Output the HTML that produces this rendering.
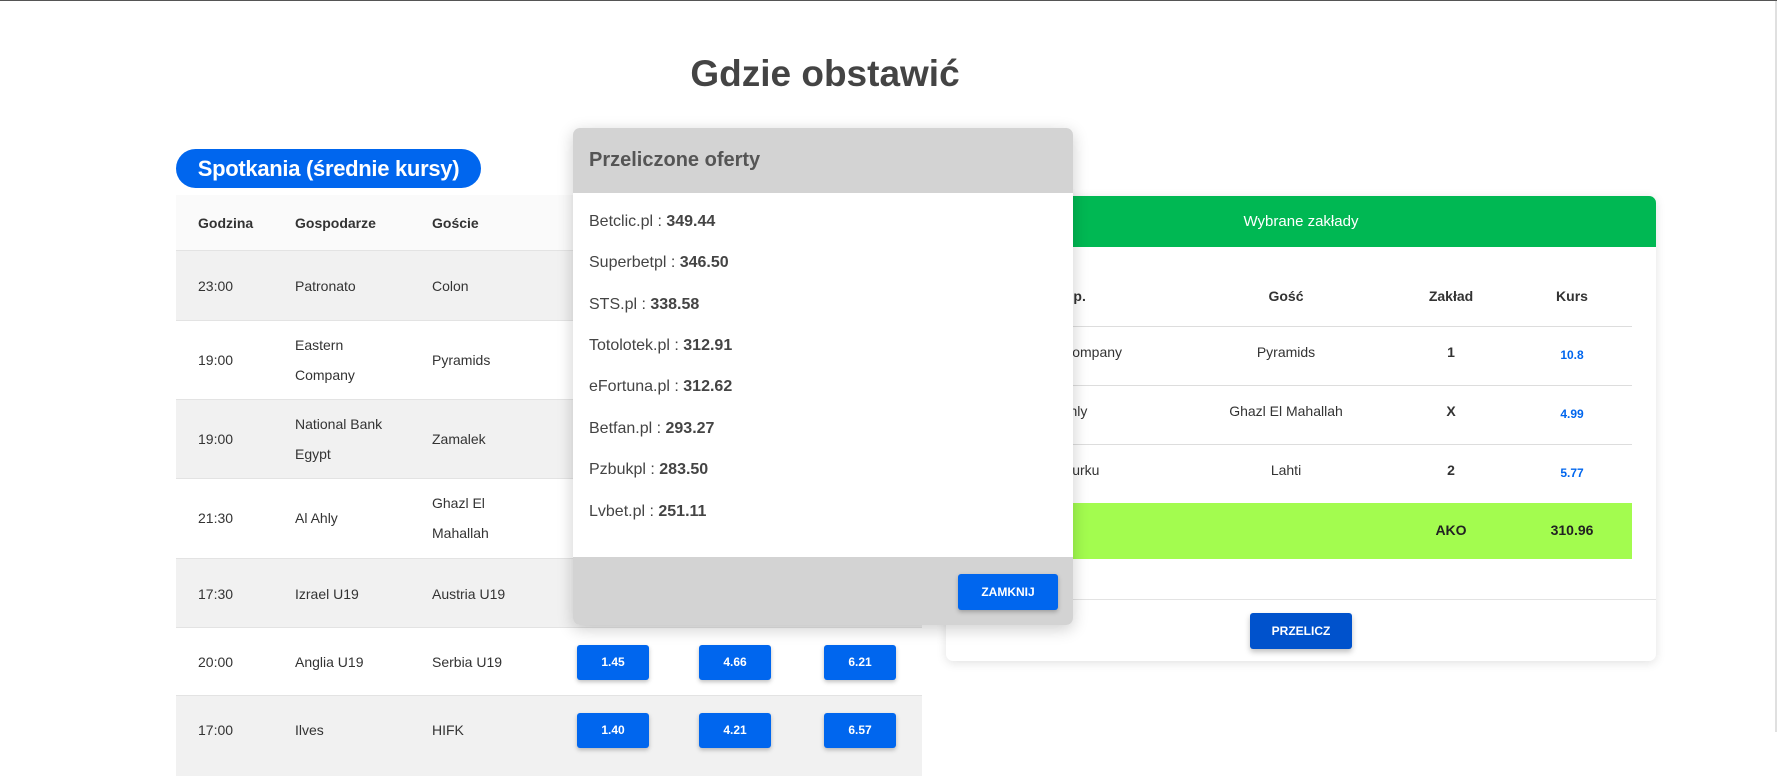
<!DOCTYPE html>
<html><head><meta charset="utf-8"><style>
*{box-sizing:border-box;margin:0;padding:0}
body{width:1777px;height:731px;overflow:hidden;background:#fff;font-family:"Liberation Sans",sans-serif;color:#333;position:relative;border-top:1px solid #555}
.abs{position:absolute}
h1{position:absolute;left:0;width:1650px;top:52px;text-align:center;font-size:37px;font-weight:bold;color:#444}
.pill{left:176px;top:148px;width:305px;height:39px;border-radius:20px;background:#0066ee;color:#fff;font-weight:bold;font-size:22px;line-height:39px;text-align:center;letter-spacing:-0.3px}
.tbl{left:176px;top:194px;width:746px}
.row{position:absolute;left:0;width:746px;border-bottom:1px solid #e3e3e3;font-size:14px;color:#333}
.row span{position:absolute;line-height:30px}
.g{background:#f1f1f1}
.btn{position:absolute;width:72px;height:35px;background:#0066ee;color:#fff;font-weight:bold;font-size:12px;text-align:center;line-height:35px;border-radius:3px;box-shadow:0 2px 4px rgba(0,0,0,.25)}
.modal{left:573px;top:127px;width:500px;height:497px;border-radius:7px;overflow:hidden;box-shadow:0 4px 16px rgba(0,0,0,.2);background:#fff}
.mh{height:65px;background:#d3d3d3;font-size:20px;font-weight:bold;color:#555;padding-left:16px;line-height:65px}
.mi{position:absolute;left:16px;font-size:16px;color:#444}
.mf{position:absolute;left:0;top:429px;width:500px;height:68px;background:#d3d3d3}
.card{left:946px;top:195px;width:710px;height:465px;border-radius:7px;box-shadow:0 2px 10px rgba(0,0,0,.12);background:#fff;overflow:hidden}
.ch{height:51px;background:#00b853;color:#fff;text-align:center;line-height:51px;font-size:15px}
.c{position:absolute;text-align:center;transform:translateX(-50%);white-space:nowrap;font-size:14px}
.hl{position:absolute;left:0;width:686px;height:1px;background:#ddd}
.k{color:#0066ee;font-weight:bold;font-size:12px}
</style></head><body>
<h1>Gdzie obstawić</h1>
<div class="abs pill">Spotkania (średnie kursy)</div>
<div class="abs tbl">
<div class="row" style="top:0;height:56px;background:#fafafa;font-weight:bold;font-size:14px"><span style="left:22px;top:13px">Godzina</span><span style="left:119px;top:13px">Gospodarze</span><span style="left:256px;top:13px">Goście</span></div>
<div class="row g" style="top:56px;height:70px"><span style="left:22px;top:20px">23:00</span><span style="left:119px;top:20px">Patronato</span><span style="left:256px;top:20px">Colon</span></div>
<div class="row" style="top:126px;height:79px"><span style="left:22px;top:24px">19:00</span><span style="left:119px;top:9px">Eastern<br>Company</span><span style="left:256px;top:24px">Pyramids</span></div>
<div class="row g" style="top:205px;height:79px"><span style="left:22px;top:24px">19:00</span><span style="left:119px;top:9px">National Bank<br>Egypt</span><span style="left:256px;top:24px">Zamalek</span></div>
<div class="row" style="top:284px;height:80px"><span style="left:22px;top:24px">21:30</span><span style="left:119px;top:24px">Al Ahly</span><span style="left:256px;top:9px">Ghazl El<br>Mahallah</span></div>
<div class="row g" style="top:364px;height:69px"><span style="left:22px;top:20px">17:30</span><span style="left:119px;top:20px">Izrael U19</span><span style="left:256px;top:20px">Austria U19</span></div>
<div class="row" style="top:433px;height:68px"><span style="left:22px;top:19px">20:00</span><span style="left:119px;top:19px">Anglia U19</span><span style="left:256px;top:19px">Serbia U19</span>
<div class="btn" style="left:401px;top:17px">1.45</div><div class="btn" style="left:523px;top:17px">4.66</div><div class="btn" style="left:648px;top:17px">6.21</div></div>
<div class="row g" style="top:501px;height:80px;border:none"><span style="left:22px;top:19px">17:00</span><span style="left:119px;top:19px">Ilves</span><span style="left:256px;top:19px">HIFK</span>
<div class="btn" style="left:401px;top:17px">1.40</div><div class="btn" style="left:523px;top:17px">4.21</div><div class="btn" style="left:648px;top:17px">6.57</div></div>
</div>
<div class="abs card">
<div class="ch">Wybrane zakłady</div>
<div class="abs" style="left:0;top:0;width:710px;height:465px">
<div class="c" style="left:120px;top:92px;font-weight:bold">Gosp.</div>
<div class="c" style="left:340px;top:92px;font-weight:bold">Gość</div>
<div class="c" style="left:505px;top:92px;font-weight:bold">Zakład</div>
<div class="c" style="left:626px;top:92px;font-weight:bold">Kurs</div>
<div class="hl" style="top:130px"></div>
<div class="c" style="left:120px;top:148px">Eastern Company</div><div class="c" style="left:340px;top:148px">Pyramids</div><div class="c" style="left:505px;top:148px;font-weight:bold">1</div><div class="c k" style="left:626px;top:152px">10.8</div>
<div class="hl" style="top:189px"></div>
<div class="c" style="left:120px;top:207px">Al Ahly</div><div class="c" style="left:340px;top:207px">Ghazl El Mahallah</div><div class="c" style="left:505px;top:207px;font-weight:bold">X</div><div class="c k" style="left:626px;top:211px">4.99</div>
<div class="hl" style="top:248px"></div>
<div class="c" style="left:120px;top:266px">Inter Turku</div><div class="c" style="left:340px;top:266px">Lahti</div><div class="c" style="left:505px;top:266px;font-weight:bold">2</div><div class="c k" style="left:626px;top:270px">5.77</div>
<div class="abs" style="left:0;top:307px;width:686px;height:56px;background:#a3fc4f"></div>
<div class="c" style="left:505px;top:326px;font-weight:bold;color:#222">AKO</div><div class="c" style="left:626px;top:326px;font-weight:bold;color:#222">310.96</div>
<div class="abs" style="left:0;top:403px;width:710px;height:1px;background:#e3e3e3"></div>
<div class="abs" style="left:304px;top:417px;width:102px;height:36px;background:#0052cc;color:#fff;font-weight:bold;font-size:12px;text-align:center;line-height:36px;border-radius:3px;box-shadow:0 3px 6px rgba(0,0,0,.25)">PRZELICZ</div>
</div></div>
<div class="abs modal">
<div class="mh">Przeliczone oferty</div>
<div class="mi" style="top:85px">Betclic.pl : <b>349.44</b></div>
<div class="mi" style="top:126px">Superbetpl : <b>346.50</b></div>
<div class="mi" style="top:168px">STS.pl : <b>338.58</b></div>
<div class="mi" style="top:209px">Totolotek.pl : <b>312.91</b></div>
<div class="mi" style="top:250px">eFortuna.pl : <b>312.62</b></div>
<div class="mi" style="top:292px">Betfan.pl : <b>293.27</b></div>
<div class="mi" style="top:333px">Pzbukpl : <b>283.50</b></div>
<div class="mi" style="top:375px">Lvbet.pl : <b>251.11</b></div>
<div class="mf"><div class="abs" style="left:385px;top:17px;width:100px;height:36px;background:#0066ee;color:#fff;font-weight:bold;font-size:12px;text-align:center;line-height:36px;border-radius:3px;box-shadow:0 2px 4px rgba(0,0,0,.25)">ZAMKNIJ</div></div>
</div>
<div class="abs" style="left:1775px;top:0;width:2px;height:731px;background:#e0e0e0"></div>
</body></html>
